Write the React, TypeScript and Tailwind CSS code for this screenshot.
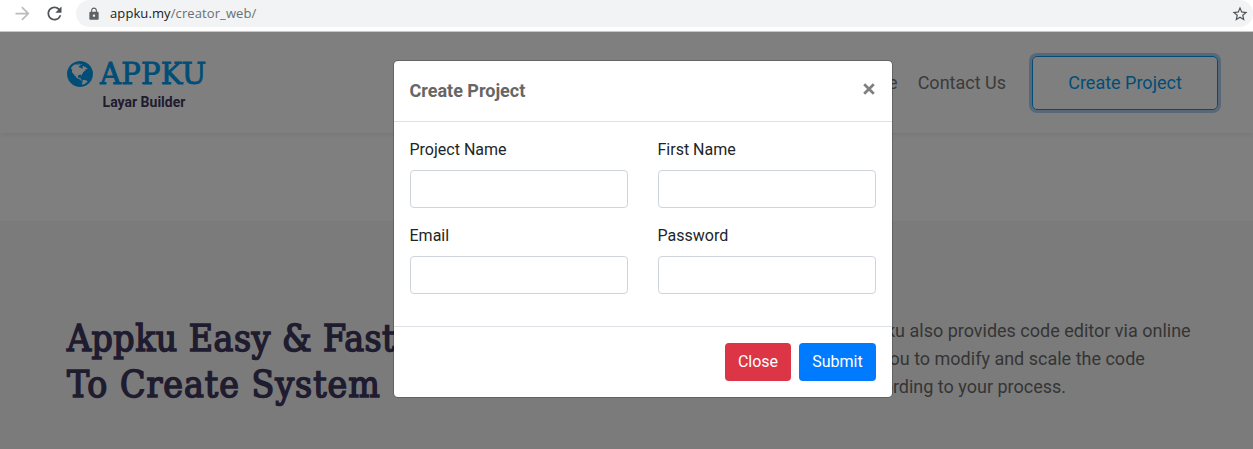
import { MdArrowForward, MdRefresh, MdLock, MdStarBorder } from "react-icons/md";

function BrowserBar() {
  return (
    <div className="flex h-[32px] shrink-0 items-start border-b border-[#c9cbcd] bg-white">
      <div className="flex h-[27px] w-[76px] shrink-0 items-center pl-[12px]">
        <MdArrowForward className="size-[21px] text-[#babcbe]" />
        <MdRefresh className="ml-[11px] size-[21px] text-[#505357]" />
      </div>
      <div className="flex h-[27px] flex-1 items-center rounded-r-full rounded-l-full bg-[#f1f3f4] pl-[11px] pr-[4px]">
        <MdLock className="size-[14px] text-[#5f6368]" />
        <span className="ml-[9px] font-['Open_Sans',sans-serif] text-[13px] leading-none tracking-[0.1px] text-[#6b6f73]">
          <span className="text-[#202124]">appku.my</span>/creator_web/
        </span>
        <MdStarBorder className="ml-auto size-[18px] text-[#505357]" />
      </div>
    </div>
  );
}

function Globe({ className }: { className: string }) {
  return (
    <svg viewBox="0 128 1536 1536" fill="currentColor" className={className}>
      <path d="M768 128q209 0 385.5 103t279.5 279.5 103 385.5-103 385.5-279.5 279.5-385.5 103-385.5-103-279.5-279.5-103-385.5 103-385.5 279.5-279.5 385.5-103zm274 521q-2 1-9.5 9.5t-13.5 9.5q2 0 4.5-5t5-11 3.5-7q6-7 22-15 14-6 52-12 34-8 51 11-2-2 9.5-13t14.5-12q3-2 15-4.5t15-7.5l2-22q-12 1-17.5-7t-6.5-21q0 2-6 8 0-7-4.5-8t-11.5 1-9 1q-10-3-15-7.5t-8-16.5-4-15q-2-5-9.5-11t-9.5-10q-1-2-2.5-5.5t-3-6.5-4-5.5-5.5-2.5-7 5-7.5 10-4.5 5q-3-2-6-1.5t-4.5 1-4.5 3-5 3.5q-3 2-8.5 3t-8.5 2q15-5-1-11-10-4-16-3 9-4 7.5-12t-8.5-14h5q-1-4-8.5-8.5t-17.5-8.5-13-6q-8-5-34-9.5t-33-.5q-5 6-4.5 10.5t4 14 3.5 12.5q1 6-5.5 13t-6.5 12q0 7 14 15.5t10 21.5q-3 8-16 16t-16 12q-5 8-1.5 18.5t10.5 16.5q2 2 1.5 4t-3.5 4.5-5.5 4-6.5 3.5l-3 2q-11 5-20.5-6t-13.5-26q-7-25-16-30-23-8-29 1-5-13-41-26-25-9-58-4 6-1 0-15-7-15-19-12 3-6 4-17.5t1-13.5q3-13 12-23 1-1 7-8.5t9.5-13.5.5-6q35 4 50-11 5-5 11.5-17t10.5-17q9-6 14-5.5t14.5 5.5 14.5 5q14 1 15.5-11t-7.5-20q12 1 3-17-5-7-8-9-12-4-27 5-8 4 2 8-1-1-9.5 10.5t-16.5 17.5-16-5q-1-1-5.5-13.5t-9.5-13.5q-8 0-16 15 3-8-11-15t-24-8q19-12-8-27-7-4-20.5-5t-19.5 4q-5 7-5.5 11.5t5 8 10.5 5.5 11.5 4 8.5 3q14 10 8 14-2 1-8.5 3.5t-11.5 4.5-6 4q-3 4 0 14t-2 14q-5-5-9-17.5t-7-16.5q7 9-25 6l-10-1q-4 0-16 2t-20.5 1-13.5-8q-4-8 0-20 1-4 4-2-4-3-11-9.5t-10-8.5q-46 15-94 41 6 1 12-1 5-2 13-6.5t10-5.5q34-14 42-7l5-5q14 16 20 25-7-4-30-1-20 6-22 12 7 12 5 18-4-3-11.5-10t-14.5-11-15-5q-16 0-22 1-146 80-235 222 7 7 12 8 4 1 5 9t2.5 11 11.5-3q9 8 3 19 1-1 44 27 19 17 21 21 3 11-10 18-1-2-9-9t-9-4q-3 5 .5 18.5t10.5 12.5q-7 0-9.5 16t-2.5 35.5-1 23.5l2 1q-3 12 5.5 34.5t21.5 19.5q-13 3 20 43 6 8 8 9 3 2 12 7.5t15 10 10 10.5q4 5 10 22.5t14 23.5q-2 6 9.5 20t10.5 23q-1 0-2.5 1t-2.5 1q3 7 15.5 14t15.5 13q1 3 2 10t3 11 8 2q2-20-24-62-15-25-17-29-3-5-5.5-15.5t-4.5-14.5q2 0 6 1.5t8.5 3.5 7.5 4 2 3q-3 7 2 17.5t12 18.5 17 19 12 13q6 6 14 19.5t0 13.5q9 0 20 10t17 20q5 8 8 26t5 24q2 7 8.5 13.5t12.5 9.5l16 8 13 7q5 2 18.5 10.5t21.5 11.5q10 4 16 4t14.5-2.5 13.5-3.5q15-2 29 15t21 21q36 19 55 11-2 1 .5 7.5t8 15.5 9 14.5 5.5 8.5q5 6 18 15t18 15q6-4 7-9-3 8 7 20t18 10q14-3 14-32-31 15-49-18 0-1-2.5-5.5t-4-8.5-2.5-8.5 0-7.5 5-3q9 0 10-3.5t-2-12.5-4-13q-1-8-11-20t-12-15q-5 9-16 8t-16-9q0 1-1.5 5.5t-1.5 6.5q-13 0-15-1 1-3 2.5-17.5t3.5-22.5q1-4 5.5-12t7.5-14.5 4-12.5-4.5-9.5-17.5-2.5q-19 1-26 20-1 3-3 10.5t-5 11.5-9 7q-7 3-24 2t-24-5q-13-8-22.5-29t-9.5-37q0-10 2.5-26.5t3-25-5.5-24.5q3-2 9-9.5t10-10.5q2-1 4.5-1.5t4.5 0 4-1.5 3-6q-1-1-4-3-3-3-4-3 7 3 28.5-1.5t27.5 1.5q15 11 22-2 0-1-2.5-9.5t-.5-13.5q5 27 29 9 3 3 15.5 5t17.5 5q3 2 7 5.5t5.5 4.5 5-.5 8.5-6.5q10 14 12 24 11 40 19 44 7 3 11 2t4.5-9.5 0-14-1.5-12.5l-1-8v-18l-1-8q-15-3-18.5-12t1.5-18.5 15-18.5q1-1 8-3.5t15.5-6.5 12.5-8q21-19 15-35 7 0 11-9-1 0-5-3t-7.5-5-4.5-2q9-5 2-16 5-3 7.5-11t7.5-10q9 12 21 2 7-8 1-16 5-7 20.5-10.5t18.5-9.5q7 2 8-2t1-12 3-12q4-5 15-9t13-5l17-11q3-4 0-4 18 2 31-11 10-11-6-20 3-6-3-9.5t-15-5.5q3-1 11.5-.5t10.5-1.5q15-10-7-16-17-5-43 12zm-163 877q206-36 351-189-3-3-12.5-4.5t-12.5-3.5q-18-7-24-8 1-7-2.5-13t-8-9-12.5-8-11-7q-2-2-7-6t-7-5.5-7.5-4.5-8.5-2-10 1l-3 1q-3 1-5.5 2.5t-5.5 3-4 3 0 2.5q-21-17-36-22-5-1-11-5.5t-10.5-7-10-1.5-11.5 7q-5 5-6 15t-2 13q-7-5 0-17.5t2-18.5q-3-6-10.5-4.5t-12 4.5-11.5 8.5-9 6.5-8.5 5.5-8.5 7.5q-3 4-6 12t-5 11q-2-4-11.5-6.5t-9.5-5.5q2 10 4 35t5 38q7 31-12 48-27 25-29 40-4 22 12 26 0 7-8 20.5t-7 21.5q0 6 2 16z" />
    </svg>
  );
}

function Field({ label, type = "text" }: { label: string; type?: string }) {
  return (
    <label className="block">
      <span className="-ml-[0.5px] block text-[16px] leading-6 text-[#212529]">{label}</span>
      <input
        type={type}
        className="mt-2 block h-[38px] w-full rounded-[4px] border border-[#ced4da] bg-white px-3"
      />
    </label>
  );
}

function Modal() {
  return (
    <div className="absolute top-[60px] left-[393px] w-[500px] rounded-[5px] border border-black/20 bg-white bg-clip-padding">
      <div className="flex h-[61px] items-start justify-between border-b border-[#dee2e6] pt-[16px] pr-[17px] pl-[15.5px]">
        <h5 className="text-[18px] leading-[27px] font-bold text-[#666]">Create Project</h5>
        <svg viewBox="0 0 12 12" className="mt-[6px] size-[12px] stroke-[#7f7f7f]" strokeWidth="2.7" fill="none">
          <path d="M1.2 1.2 10.8 10.8M10.8 1.2 1.2 10.8" />
        </svg>
      </div>
      <div className="grid grid-cols-2 gap-x-[30px] gap-y-4 px-4 pt-4 pb-8">
        <Field label="Project Name" />
        <Field label="First Name" />
        <Field label="Email" />
        <Field label="Password" type="password" />
      </div>
      <div className="flex justify-end gap-2 border-t border-[#dee2e6] p-4 text-[16px] leading-6 text-white">
        <button className="h-[38px] w-[66px] rounded-[4px] bg-[#dc3545]">Close</button>
        <button className="h-[38px] w-[77px] rounded-[4px] bg-[#007bff]">Submit</button>
      </div>
    </div>
  );
}

export default function App() {
  return (
    <div className="relative flex h-[449px] w-[1253px] flex-col overflow-hidden bg-white font-[Roboto,sans-serif]">
      <BrowserBar />
      <div className="relative flex flex-1 flex-col">
        <header className="flex h-[101px] shrink-0 justify-between pr-[35px] pl-[67px] shadow-[0_2px_6px_rgba(0,0,0,0.07)]">
          <div className="w-[154px] pt-[24px]">
            <div className="flex h-[36px] items-center text-[#009cee]">
              <Globe className="size-[26px]" />
              <span className="ml-[7px] pt-px font-['DejaVu_Serif',serif] text-[29px] leading-none tracking-[0.3px] [-webkit-text-stroke:0.9px_#009cee]">
                APPKU
              </span>
            </div>
            <div className="text-center text-[14px] leading-5 font-bold text-[#413960]">Layar Builder</div>
          </div>
          <nav className="mt-[24px] flex h-[54px] items-center self-start text-[18px] text-[#777]">
            <span className="-mt-[2px]">Home</span>
            <span className="-mt-[2px] ml-[20px]">Contact Us</span>
            <button className="ml-[26px] h-[54px] w-[186px] rounded-[5px] border border-[#009cee] pb-[2px] text-[18px] text-[#009cee] shadow-[0_0_0_3px_rgba(0,98,215,0.3)]">
              Create Project
            </button>
          </nav>
        </header>
        <section className="mt-[88px] flex flex-1 items-start justify-between bg-[#f7f7f7] pt-[95px] pr-[59px] pl-[67px]">
          <h1 className="w-[340px] font-['DejaVu_Serif_Condensed','DejaVu_Serif',serif] text-[37px] leading-[45.6px] font-normal whitespace-nowrap text-[#413960] [-webkit-text-stroke:1.5px_#413960]">
            <span className="block tracking-[0.5px]">Appku Easy &amp; Fast</span>
            <span className="block tracking-[1px]">To Create System</span>
          </h1>
          <p className="w-[340px] pt-px text-[18px] leading-[28px] whitespace-nowrap text-[#6b6b6b]">
            Appku also provides code editor via online
            <br />
            for you to modify and scale the code
            <br />
            according to your process.
          </p>
        </section>
        <div className="absolute inset-0 bg-black/50" />
      </div>
      <Modal />
    </div>
  );
}
